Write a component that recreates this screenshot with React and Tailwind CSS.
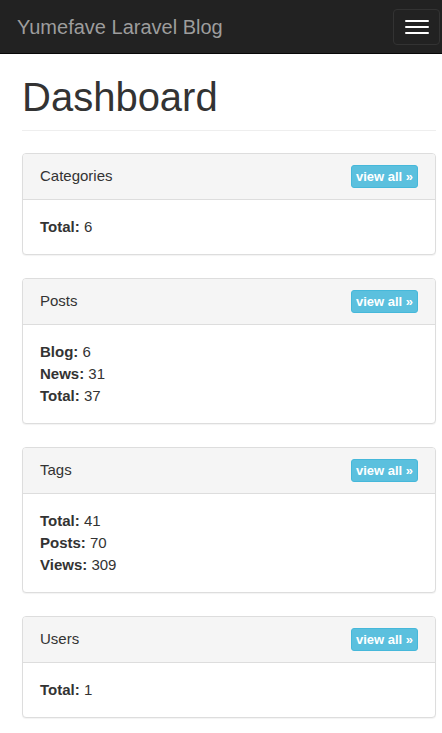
import React from 'react'

const panels = [
  { title: 'Categories', rows: [['Total', 6]] },
  { title: 'Posts', rows: [['Blog', 6], ['News', 31], ['Total', 37]] },
  { title: 'Tags', rows: [['Total', 41], ['Posts', 70], ['Views', 309]] },
  { title: 'Users', rows: [['Total', 1]] },
]

const Panel = ({ title, rows }) => (
  <div className="mb-[23px] bg-white border border-[#ddd] rounded-[4px] shadow-[0_1px_1px_rgba(0,0,0,0.05)]">
    <div className="h-[46px] px-[17px] flex items-center justify-between bg-[#f5f5f5] border-b border-[#ddd] rounded-t-[3px]">
      <h3 className="text-[15px] text-[#333]">{title}</h3>
      <a
        href="#"
        className="h-[23px] px-[4px] flex items-center text-[13px] font-bold text-white bg-[#5bc0de] border border-[#46b8da] rounded-[3px]"
      >
        view all »
      </a>
    </div>
    <div className="px-[17px] pt-[16px] pb-[16px] text-[15px] leading-[22px] text-[#333]">
      {rows.map(([label, value]) => (
        <div key={label}>
          <strong>{label}:</strong> {value}
        </div>
      ))}
    </div>
  </div>
)

const App = () => {
  return (
    <div
      className="min-h-screen bg-white"
      style={{ fontFamily: '"Liberation Sans", Arial, sans-serif' }}
    >
      {/* Navbar */}
      <nav className="h-[54px] bg-[#222] border-b border-[#080808] flex items-center justify-between pl-[17px] pr-[2px]">
        <a href="#" className="text-[20px] text-[#9d9d9d]">
          Yumefave Laravel Blog
        </a>
        <button className="w-[47px] h-[36px] border border-[#333] rounded-[4px] flex flex-col items-center justify-center gap-[4px]">
          <span className="block w-[24px] h-[2px] bg-white rounded-[1px]" />
          <span className="block w-[24px] h-[2px] bg-white rounded-[1px]" />
          <span className="block w-[24px] h-[2px] bg-white rounded-[1px]" />
        </button>
      </nav>

      <div className="pl-[22px] pr-[6px]">
        {/* Page header */}
        <div className="mt-[21px] pb-[11px] mb-[22px] border-b border-[#eee]">
          <h1 className="text-[40px] leading-[44px] text-[#333]">Dashboard</h1>
        </div>

        {panels.map((p) => (
          <Panel key={p.title} {...p} />
        ))}
      </div>
    </div>
  )
}

export default App
